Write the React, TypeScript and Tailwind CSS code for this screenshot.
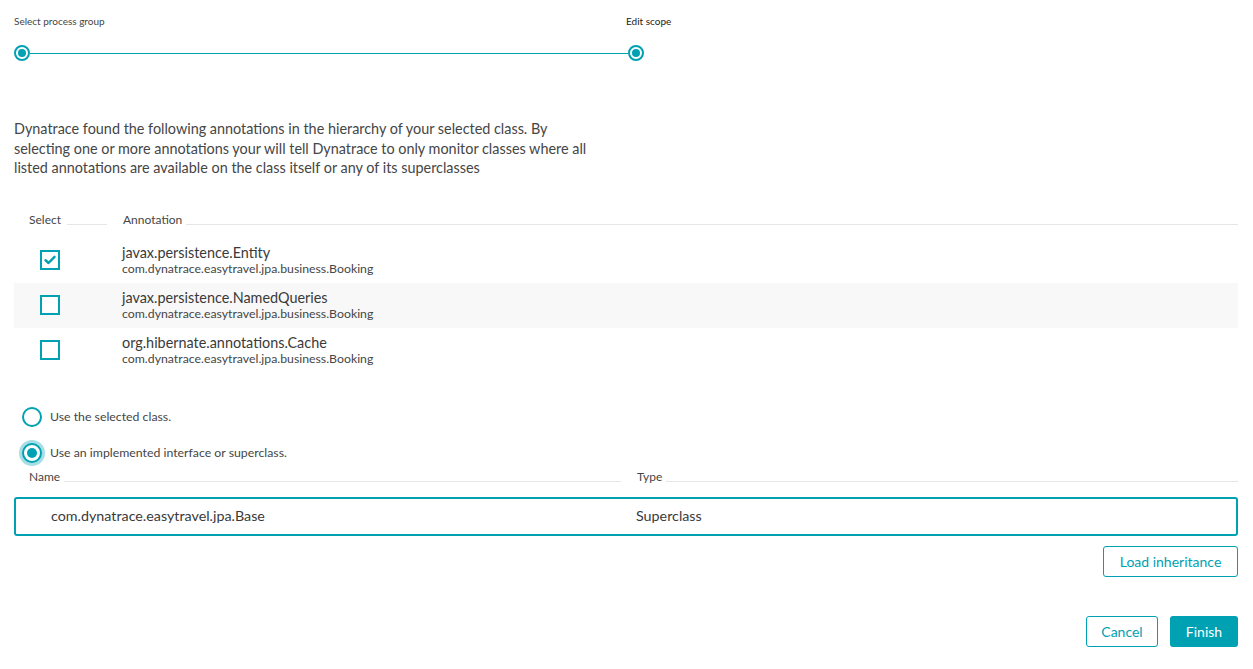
import React from "react";

const T = "#00a1b2";

function StepDot() {
  return (
    <div className="w-4 h-4 rounded-full border-2 border-[#00a1b2] flex items-center justify-center bg-white shrink-0">
      <div className="w-2 h-2 rounded-full bg-[#00a1b2]" />
    </div>
  );
}

function Checkbox({ checked }: { checked?: boolean }) {
  return (
    <div className="w-5 h-5 border-2 border-[#00a1b2] bg-white flex items-center justify-center">
      {checked && (
        <svg width="12" height="10" viewBox="0 0 12 10">
          <path d="M1.5 5.2 L4.5 8 L10.5 1.8" fill="none" stroke={T} strokeWidth="2.4" strokeLinecap="round" strokeLinejoin="round" />
        </svg>
      )}
    </div>
  );
}

function Radio({ checked }: { checked?: boolean }) {
  return (
    <div
      className={
        checked
          ? "w-5 h-5 rounded-full border-2 border-[#00a1b2] bg-white flex items-center justify-center shadow-[0_0_0_3px_rgba(0,161,178,0.35)]"
          : "w-5 h-5 rounded-full border-2 border-[#00a1b2] bg-white flex items-center justify-center"
      }
    >
      {checked && <div className="w-[10px] h-[10px] rounded-full bg-[#00a1b2]" />}
    </div>
  );
}

const rows = [
  { name: "javax.persistence.Entity", checked: true },
  { name: "javax.persistence.NamedQueries" },
  { name: "org.hibernate.annotations.Cache" },
];

export default function App() {
  return (
    <div className="w-[1253px] h-[669px] bg-white pl-[14px] pr-[15px] font-['Lato',sans-serif] text-[#454646] flex flex-col overflow-hidden">
      {/* Stepper */}
      <div className="pt-[14px] flex text-[10px] leading-[14px]">
        <div className="w-[612px]">Select process group</div>
        <div className="text-[#222]">Edit scope</div>
      </div>
      <div className="mt-[17px] w-[630px] flex items-center">
        <StepDot />
        <div className="flex-1 h-px bg-[#00a1b2]" />
        <StepDot />
      </div>

      {/* Description */}
      <p className="mt-[58px] text-[14.4px] leading-[19.5px] whitespace-nowrap">
        Dynatrace found the following annotations in the hierarchy of your selected class. By
        <br />
        selecting one or more annotations your will tell Dynatrace to only monitor classes where all
        <br />
        listed annotations are available on the class itself or any of its superclasses
      </p>

      {/* Table header */}
      <div className="mt-[35px] flex items-end text-[12px] leading-[14px]">
        <div className="w-[93px] pl-[15px] flex items-end gap-[6px]">
          <span>Select</span>
          <div className="flex-1 h-px bg-[#e6e6e6] mb-[2px]" />
        </div>
        <div className="flex-1 pl-[16px] flex items-end gap-[4px]">
          <span>Annotation</span>
          <div className="flex-1 h-px bg-[#e6e6e6] mb-[2px]" />
        </div>
      </div>

      <div className="mt-[11px] flex flex-col">
        {rows.map((r, i) => (
          <div key={r.name} className={i === 1 ? "h-[45px] flex items-center bg-[#f8f8f8]" : "h-[45px] flex items-center"}>
            <div className="w-[108px] pl-[26px]">
              <Checkbox checked={r.checked} />
            </div>
            <div className="flex flex-col">
              <span className="text-[14.4px] leading-[17px] text-[#3a3a3a]">{r.name}</span>
              <span className="text-[12.3px] leading-[16px]">com.dynatrace.easytravel.jpa.business.Booking</span>
            </div>
          </div>
        ))}
      </div>

      {/* Radios */}
      <div className="mt-[34px] flex flex-col gap-[16px] text-[12.3px] leading-[20px]">
        <div className="flex items-center gap-[8px] pl-[8px]">
          <Radio />
          <span>Use the selected class.</span>
        </div>
        <div className="flex items-center gap-[8px] pl-[8px]">
          <Radio checked />
          <span>Use an implemented interface or superclass.</span>
        </div>
      </div>

      {/* Name/Type header */}
      <div className="mt-[7px] flex items-end text-[12px] leading-[14px]">
        <div className="w-[608px] pl-[15px] flex items-end gap-[4px]">
          <span>Name</span>
          <div className="flex-1 h-px bg-[#e6e6e6] mb-[2px] mr-px" />
        </div>
        <div className="flex-1 pl-[15px] flex items-end gap-[4px]">
          <span>Type</span>
          <div className="flex-1 h-px bg-[#e6e6e6] mb-[2px]" />
        </div>
      </div>

      <div className="mt-[13px] h-[39px] border-2 border-[#00a1b2] rounded-[3px] flex items-center text-[14.3px] text-[#3a3a3a]">
        <div className="w-[606px] pl-[35px]">com.dynatrace.easytravel.jpa.Base</div>
        <div className="pl-[14px]">Superclass</div>
      </div>

      <div className="mt-[10px] flex justify-end">
        <button className="h-[31px] w-[135px] border border-[#00a1b2] rounded-[3px] text-[#00a1b2] text-[14px] bg-white">
          Load inheritance
        </button>
      </div>

      <div className="mt-[39px] flex justify-end gap-[12px]">
        <button className="h-[31px] w-[72px] border border-[#00a1b2] rounded-[3px] text-[#00a1b2] text-[14px] bg-white">
          Cancel
        </button>
        <button className="h-[31px] w-[68px] rounded-[3px] bg-[#00a1b2] text-white text-[14px]">Finish</button>
      </div>
    </div>
  );
}
